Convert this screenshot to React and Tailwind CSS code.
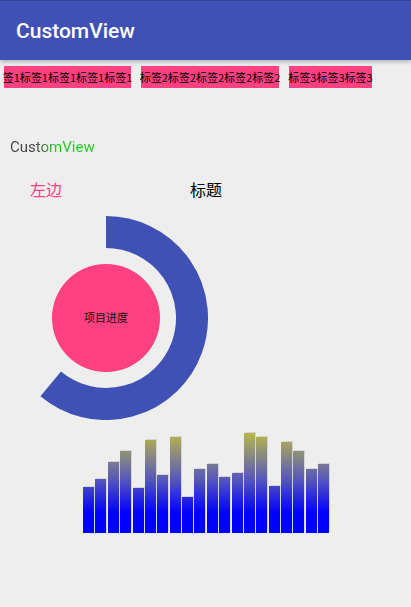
import React from 'react';

const bars = [46, 54, 71, 82, 45, 93, 58, 96, 36, 64, 69, 56, 60, 100, 96, 47, 91, 82, 64, 69];

const tags = [
  { text: '签1标签1标签1标签1标签1', w: 'w-[127px]' },
  { text: '标签2标签2标签2标签2标签2', w: 'w-[138px]' },
  { text: '标签3标签3标签3', w: 'w-[83px]' },
];

const ProgressRing = () => {
  // arc from 12 o'clock clockwise, ~220 degrees
  const r = 86;
  const a = (130 * Math.PI) / 180;
  const ex = 102 + r * Math.cos(a);
  const ey = 102 + r * Math.sin(a);
  return (
    <svg width="204" height="204" viewBox="0 0 204 204">
      <path
        d={`M 102 16 A ${r} ${r} 0 1 1 ${ex} ${ey}`}
        fill="none"
        stroke="#3F51B5"
        strokeWidth="32"
      />
      <circle cx="102" cy="102" r="54" fill="#FF4081" />
      <text
        x="102"
        y="106"
        textAnchor="middle"
        fontSize="11"
        fill="#111"
        style={{ fontFamily: '"Noto Sans CJK SC", sans-serif' }}
      >
        项目进度
      </text>
    </svg>
  );
};

const App = () => {
  return (
    <div className="w-[411px] h-[607px] bg-[#EEEEEE] overflow-hidden font-['Roboto','Noto_Sans_CJK_SC',sans-serif]">
      {/* Toolbar */}
      <div className="h-[60px] bg-[#3F51B5] border-t border-[#33419a] shadow-[0_2px_4px_rgba(0,0,0,0.25)] flex items-center pl-4">
        <span className="text-white text-[21px] font-medium mt-[3px]">CustomView</span>
      </div>

      {/* Tags */}
      <div className="flex gap-[10px] pl-[4px] mt-[6px]">
        {tags.map((t, i) => (
          <div
            key={i}
            className={`h-[22px] bg-[#FF4081] flex items-center justify-center whitespace-nowrap text-[11px] text-black ${t.w}`}
          >
            <span className="font-['Noto_Sans_CJK_SC',sans-serif] leading-none">{t.text}</span>
          </div>
        ))}
      </div>

      {/* Gradient title */}
      <div className="mt-[49px] ml-[10px] h-[20px] flex items-center">
        <span className="text-[15px] bg-gradient-to-r from-[#444444] from-[28%] to-[#22cc22] to-[55%] bg-clip-text text-transparent">
          CustomView
        </span>
      </div>

      {/* Left / title row */}
      <div className="flex mt-[20px] h-[24px] items-center text-[16px] font-['Noto_Sans_CJK_SC',sans-serif]">
        <span className="ml-[30px] w-[160px] text-[#FF4081]">左边</span>
        <span className="text-black">标题</span>
      </div>

      {/* Ring */}
      <div className="ml-[4px] mt-[15px]">
        <ProgressRing />
      </div>

      {/* Bar chart */}
      <div className="ml-[83px] mt-[13px] w-[246px] h-[100px] flex items-end gap-[1.37px]">
        {bars.map((h, i) => (
          <div
            key={i}
            className="flex-1 bg-[linear-gradient(to_top,#0000ff_0%,#0000ff_20%,#5a5ab8_55%,#b8b848_100%)] bg-[length:100%_100px] bg-bottom shadow-[1px_-1px_0_rgba(90,90,140,0.18)]"
            style={{ height: `${h}px` }}
          />
        ))}
      </div>
    </div>
  );
};

export default App;
